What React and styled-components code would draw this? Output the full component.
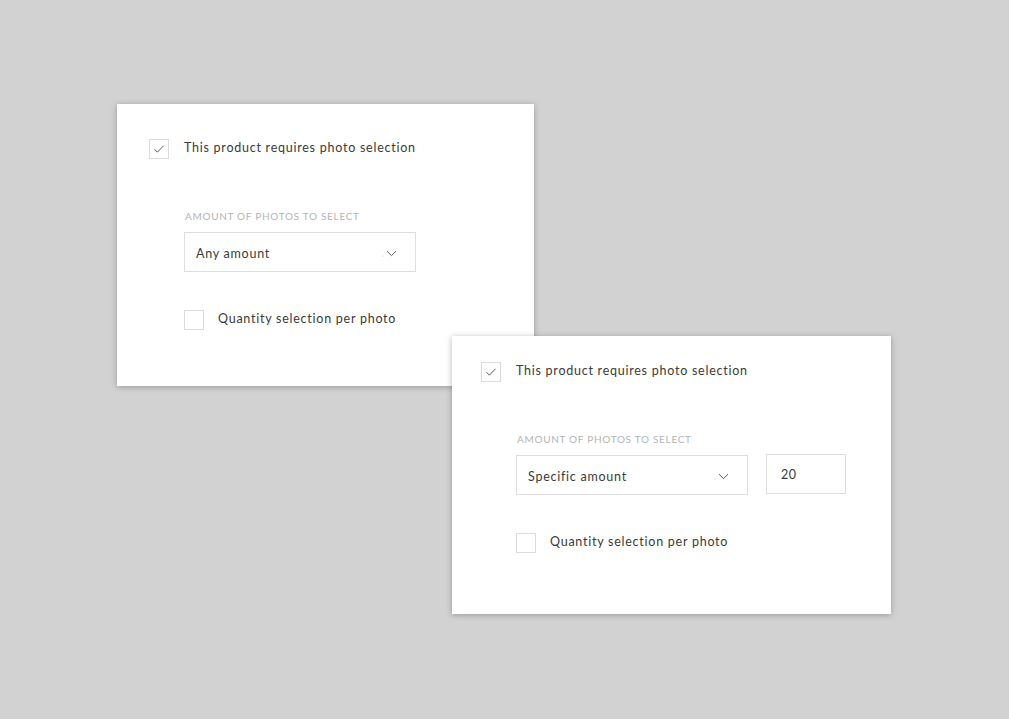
import React from "react";
import styled, { createGlobalStyle } from "styled-components";

const GlobalStyle = createGlobalStyle`
  html, body {
    margin: 0;
    padding: 0;
    background: #d2d2d2;
  }
  body {
    font-family: Lato, "Liberation Sans", sans-serif;
  }
`;

// the grey desk the two cards lie on
const Canvas = styled.div`
  position: relative;
  width: 1009px;
  height: 719px;
  background: #d2d2d2;
  overflow: hidden;
`;

// a settings card, placed on the canvas like a window
const Card = styled.div`
  position: absolute;
  left: ${(p) => p.x}px;
  top: ${(p) => p.y}px;
  width: ${(p) => p.w}px;
  height: ${(p) => p.h}px;
  box-sizing: border-box;
  padding: ${(p) => p.pad};
  background: #ffffff;
  box-shadow: 0 1px 6px rgba(0, 0, 0, 0.28);
  display: flex;
  flex-direction: column;
`;

const CheckRow = styled.label`
  display: flex;
  align-items: center;
  gap: 15px;
  height: 20px;
`;

const Box = styled.span`
  width: 20px;
  height: 20px;
  box-sizing: border-box;
  border: 1px solid #dcdcdc;
  display: flex;
  align-items: center;
  justify-content: center;
  flex: none;
`;

const RowText = styled.span`
  font-size: 12.5px;
  letter-spacing: 0.75px;
  color: #3a3a3a;
  line-height: 20px;
  position: relative;
  top: -1px;
`;

// indented block under the main checkbox
const Section = styled.div`
  display: flex;
  flex-direction: column;
  margin-left: ${(p) => p.indent}px;
  margin-top: ${(p) => p.top}px;
`;

const FieldLabel = styled.div`
  font-size: 10px;
  letter-spacing: 0.7px;
  color: #b4b4b4;
  line-height: 12px;
  text-transform: uppercase;
  margin-left: 1px;
`;

const FieldRow = styled.div`
  display: flex;
  align-items: flex-start;
  gap: 18px;
  margin-top: 10px;
`;

const Select = styled.div`
  width: 232px;
  height: 40px;
  box-sizing: border-box;
  border: 1px solid #dedede;
  display: flex;
  align-items: center;
  justify-content: space-between;
  padding: 0 18px 0 11px;
  font-size: 12.5px;
  letter-spacing: 0.75px;
  color: #3a3a3a;
`;

const SelectValue = styled.span`
  position: relative;
  top: 1px;
`;

const Chevron = styled.span`
  display: flex;
  align-items: center;
  gap: 2px;
  margin-top: 3px;
`;

const NumberBox = styled.div`
  width: 80px;
  height: 40px;
  box-sizing: border-box;
  border: 1px solid #dedede;
  margin-top: -1px;
  display: flex;
  align-items: center;
  padding: 0 14px;
  font-size: 12.5px;
  letter-spacing: 0.6px;
  color: #3a3a3a;
`;

const QuantityRow = styled(CheckRow)`
  margin-top: 38px;
  gap: 14px;
`;

const Tick = () => (
  <svg width="12" height="10" viewBox="0 0 12 10">
    <path d="M1.5 5.2 L4.4 8.2 L10.5 1.8" fill="none" stroke="#4a4a4a" strokeWidth="0.9" />
  </svg>
);

const ChevronIcon = () => (
  <Chevron>
    <svg width="2" height="6" viewBox="0 0 2 6">
      <circle cx="1" cy="5" r="0.5" fill="#bbb" />
    </svg>
    <svg width="11" height="7" viewBox="0 0 11 7">
      <path d="M1 1.2 L5.5 5.6 L10 1.2" fill="none" stroke="#4a4a4a" strokeWidth="0.9" />
    </svg>
  </Chevron>
);

const PhotoSettings = ({ x, y, w, h, pad, indent, sectionTop, value, amount }) => (
  <Card x={x} y={y} w={w} h={h} pad={pad}>
    <CheckRow>
      <Box>
        <Tick />
      </Box>
      <RowText>This product requires photo selection</RowText>
    </CheckRow>
    <Section indent={indent} top={sectionTop}>
      <FieldLabel>Amount of photos to select</FieldLabel>
      <FieldRow>
        <Select>
          <SelectValue>{value}</SelectValue>
          <ChevronIcon />
        </Select>
        {amount && <NumberBox>{amount}</NumberBox>}
      </FieldRow>
      <QuantityRow>
        <Box />
        <RowText>Quantity selection per photo</RowText>
      </QuantityRow>
    </Section>
  </Card>
);

export default function App() {
  return (
    <Canvas>
      <GlobalStyle />
      <PhotoSettings
        x={117}
        y={104}
        w={417}
        h={282}
        pad="35px 0 0 32px"
        indent={35}
        sectionTop={51}
        value="Any amount"
      />
      <PhotoSettings
        x={452}
        y={336}
        w={439}
        h={278}
        pad="26px 0 0 29px"
        indent={35}
        sectionTop={51}
        value="Specific amount"
        amount="20"
      />
    </Canvas>
  );
}
